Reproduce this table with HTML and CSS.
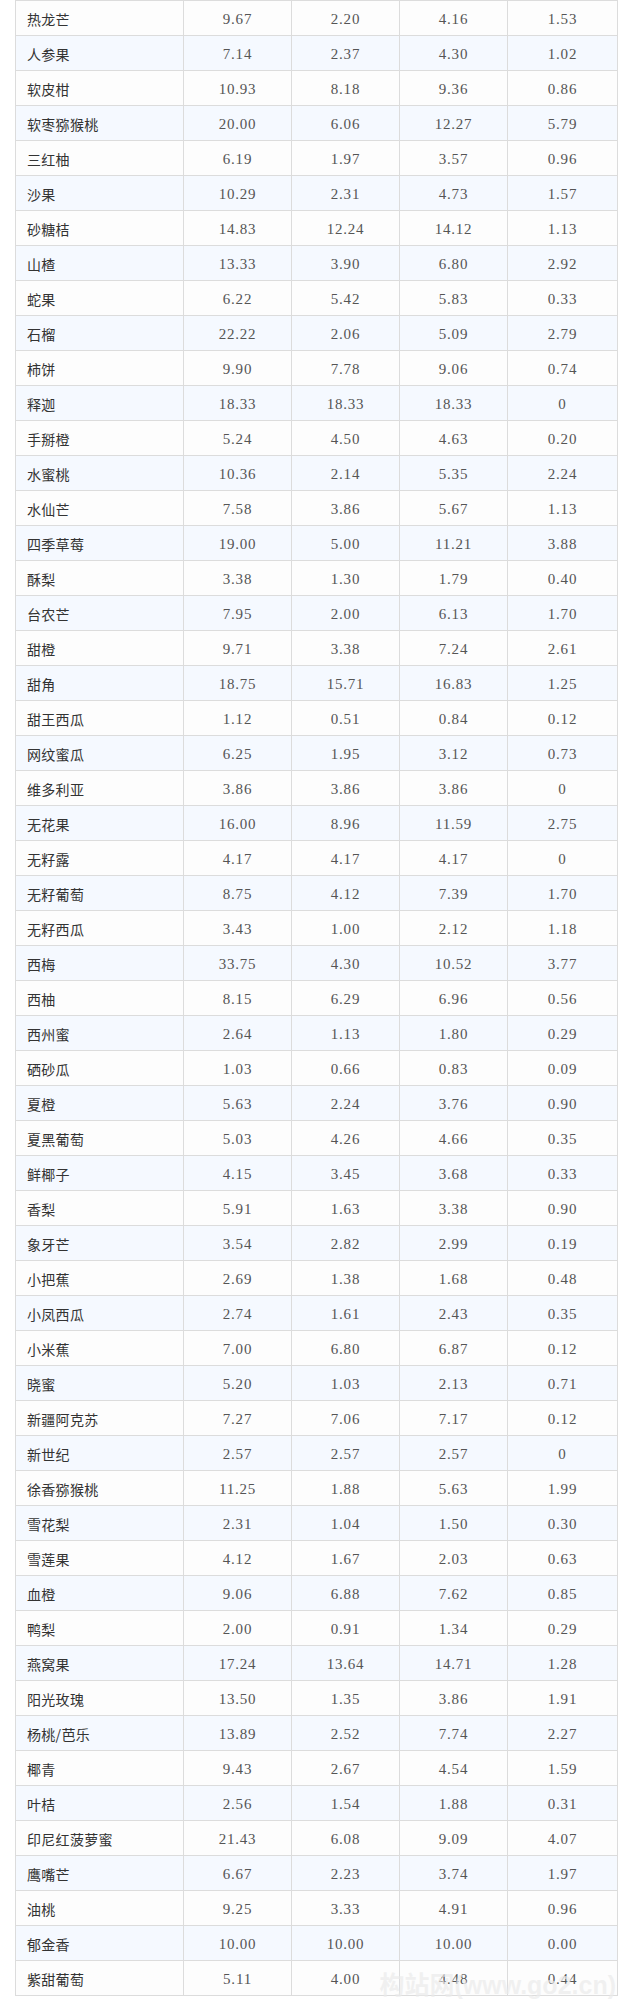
FILE: index.html
```html
<!DOCTYPE html>
<html lang="zh-CN">
<head>
<meta charset="utf-8">
<title>水果价格表</title>
<link rel="stylesheet" href="styles.css">
</head>
<body>
<div class="page">
<table class="price-table">
<colgroup>
<col class="col-name"><col class="col-num"><col class="col-num"><col class="col-num"><col class="col-last">
</colgroup>
<tbody>
<tr><td class="name">热龙芒</td><td>9.67</td><td>2.20</td><td>4.16</td><td>1.53</td></tr>
<tr><td class="name">人参果</td><td>7.14</td><td>2.37</td><td>4.30</td><td>1.02</td></tr>
<tr><td class="name">软皮柑</td><td>10.93</td><td>8.18</td><td>9.36</td><td>0.86</td></tr>
<tr><td class="name">软枣猕猴桃</td><td>20.00</td><td>6.06</td><td>12.27</td><td>5.79</td></tr>
<tr><td class="name">三红柚</td><td>6.19</td><td>1.97</td><td>3.57</td><td>0.96</td></tr>
<tr><td class="name">沙果</td><td>10.29</td><td>2.31</td><td>4.73</td><td>1.57</td></tr>
<tr><td class="name">砂糖桔</td><td>14.83</td><td>12.24</td><td>14.12</td><td>1.13</td></tr>
<tr><td class="name">山楂</td><td>13.33</td><td>3.90</td><td>6.80</td><td>2.92</td></tr>
<tr><td class="name">蛇果</td><td>6.22</td><td>5.42</td><td>5.83</td><td>0.33</td></tr>
<tr><td class="name">石榴</td><td>22.22</td><td>2.06</td><td>5.09</td><td>2.79</td></tr>
<tr><td class="name">柿饼</td><td>9.90</td><td>7.78</td><td>9.06</td><td>0.74</td></tr>
<tr><td class="name">释迦</td><td>18.33</td><td>18.33</td><td>18.33</td><td>0</td></tr>
<tr><td class="name">手掰橙</td><td>5.24</td><td>4.50</td><td>4.63</td><td>0.20</td></tr>
<tr><td class="name">水蜜桃</td><td>10.36</td><td>2.14</td><td>5.35</td><td>2.24</td></tr>
<tr><td class="name">水仙芒</td><td>7.58</td><td>3.86</td><td>5.67</td><td>1.13</td></tr>
<tr><td class="name">四季草莓</td><td>19.00</td><td>5.00</td><td>11.21</td><td>3.88</td></tr>
<tr><td class="name">酥梨</td><td>3.38</td><td>1.30</td><td>1.79</td><td>0.40</td></tr>
<tr><td class="name">台农芒</td><td>7.95</td><td>2.00</td><td>6.13</td><td>1.70</td></tr>
<tr><td class="name">甜橙</td><td>9.71</td><td>3.38</td><td>7.24</td><td>2.61</td></tr>
<tr><td class="name">甜角</td><td>18.75</td><td>15.71</td><td>16.83</td><td>1.25</td></tr>
<tr><td class="name">甜王西瓜</td><td>1.12</td><td>0.51</td><td>0.84</td><td>0.12</td></tr>
<tr><td class="name">网纹蜜瓜</td><td>6.25</td><td>1.95</td><td>3.12</td><td>0.73</td></tr>
<tr><td class="name">维多利亚</td><td>3.86</td><td>3.86</td><td>3.86</td><td>0</td></tr>
<tr><td class="name">无花果</td><td>16.00</td><td>8.96</td><td>11.59</td><td>2.75</td></tr>
<tr><td class="name">无籽露</td><td>4.17</td><td>4.17</td><td>4.17</td><td>0</td></tr>
<tr><td class="name">无籽葡萄</td><td>8.75</td><td>4.12</td><td>7.39</td><td>1.70</td></tr>
<tr><td class="name">无籽西瓜</td><td>3.43</td><td>1.00</td><td>2.12</td><td>1.18</td></tr>
<tr><td class="name">西梅</td><td>33.75</td><td>4.30</td><td>10.52</td><td>3.77</td></tr>
<tr><td class="name">西柚</td><td>8.15</td><td>6.29</td><td>6.96</td><td>0.56</td></tr>
<tr><td class="name">西州蜜</td><td>2.64</td><td>1.13</td><td>1.80</td><td>0.29</td></tr>
<tr><td class="name">硒砂瓜</td><td>1.03</td><td>0.66</td><td>0.83</td><td>0.09</td></tr>
<tr><td class="name">夏橙</td><td>5.63</td><td>2.24</td><td>3.76</td><td>0.90</td></tr>
<tr><td class="name">夏黑葡萄</td><td>5.03</td><td>4.26</td><td>4.66</td><td>0.35</td></tr>
<tr><td class="name">鲜椰子</td><td>4.15</td><td>3.45</td><td>3.68</td><td>0.33</td></tr>
<tr><td class="name">香梨</td><td>5.91</td><td>1.63</td><td>3.38</td><td>0.90</td></tr>
<tr><td class="name">象牙芒</td><td>3.54</td><td>2.82</td><td>2.99</td><td>0.19</td></tr>
<tr><td class="name">小把蕉</td><td>2.69</td><td>1.38</td><td>1.68</td><td>0.48</td></tr>
<tr><td class="name">小凤西瓜</td><td>2.74</td><td>1.61</td><td>2.43</td><td>0.35</td></tr>
<tr><td class="name">小米蕉</td><td>7.00</td><td>6.80</td><td>6.87</td><td>0.12</td></tr>
<tr><td class="name">晓蜜</td><td>5.20</td><td>1.03</td><td>2.13</td><td>0.71</td></tr>
<tr><td class="name">新疆阿克苏</td><td>7.27</td><td>7.06</td><td>7.17</td><td>0.12</td></tr>
<tr><td class="name">新世纪</td><td>2.57</td><td>2.57</td><td>2.57</td><td>0</td></tr>
<tr><td class="name">徐香猕猴桃</td><td>11.25</td><td>1.88</td><td>5.63</td><td>1.99</td></tr>
<tr><td class="name">雪花梨</td><td>2.31</td><td>1.04</td><td>1.50</td><td>0.30</td></tr>
<tr><td class="name">雪莲果</td><td>4.12</td><td>1.67</td><td>2.03</td><td>0.63</td></tr>
<tr><td class="name">血橙</td><td>9.06</td><td>6.88</td><td>7.62</td><td>0.85</td></tr>
<tr><td class="name">鸭梨</td><td>2.00</td><td>0.91</td><td>1.34</td><td>0.29</td></tr>
<tr><td class="name">燕窝果</td><td>17.24</td><td>13.64</td><td>14.71</td><td>1.28</td></tr>
<tr><td class="name">阳光玫瑰</td><td>13.50</td><td>1.35</td><td>3.86</td><td>1.91</td></tr>
<tr><td class="name">杨桃/芭乐</td><td>13.89</td><td>2.52</td><td>7.74</td><td>2.27</td></tr>
<tr><td class="name">椰青</td><td>9.43</td><td>2.67</td><td>4.54</td><td>1.59</td></tr>
<tr><td class="name">叶桔</td><td>2.56</td><td>1.54</td><td>1.88</td><td>0.31</td></tr>
<tr><td class="name">印尼红菠萝蜜</td><td>21.43</td><td>6.08</td><td>9.09</td><td>4.07</td></tr>
<tr><td class="name">鹰嘴芒</td><td>6.67</td><td>2.23</td><td>3.74</td><td>1.97</td></tr>
<tr><td class="name">油桃</td><td>9.25</td><td>3.33</td><td>4.91</td><td>0.96</td></tr>
<tr><td class="name">郁金香</td><td>10.00</td><td>10.00</td><td>10.00</td><td>0.00</td></tr>
<tr><td class="name">紫甜葡萄</td><td>5.11</td><td>4.00</td><td>4.48</td><td>0.44</td></tr>
</tbody>
</table>
<div class="watermark">构站网(www.go2.cn)</div>
</div>
</body>
</html>
```

FILE: styles.css
```css
html, body {
  margin: 0;
  padding: 0;
  background: #ffffff;
}

.page {
  position: relative;
  padding: 0 15px 16px 15px;
  width: 602px;
}

.price-table {
  width: 602px;
  border-collapse: collapse;
  table-layout: fixed;
  font-family: "Liberation Serif", "Noto Sans CJK SC", serif;
  font-size: 15px;
  color: #555555;
}

.col-name { width: 168px; }
.col-num { width: 108px; }
.col-last { width: 110px; }

.price-table td {
  height: 35px;
  padding: 2px 10px 0 10px;
  border: 1px solid #dcdcdc;
  text-align: center;
  vertical-align: middle;
  letter-spacing: 0.8px;
  box-sizing: border-box;
}

.price-table tr {
  background: #fdfdfd;
}

.price-table tr:nth-child(even) {
  background: #f5f9ff;
}

.price-table td.name {
  text-align: left;
  padding-left: 11px;
  font-family: "Noto Sans CJK SC", sans-serif;
  font-size: 14px;
  letter-spacing: 0.3px;
  color: #333333;
}

.watermark {
  position: absolute;
  right: 16px;
  bottom: 16px;
  font-family: "Liberation Sans", "Noto Sans CJK SC", sans-serif;
  font-weight: bold;
  font-size: 25px;
  line-height: 22px;
  color: rgba(235, 235, 235, 0.7);
  white-space: nowrap;
  pointer-events: none;
}
```
